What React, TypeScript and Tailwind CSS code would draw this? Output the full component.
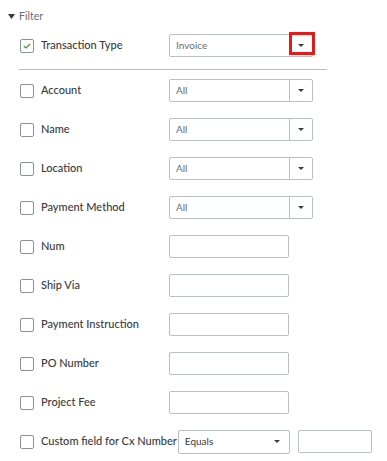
import React from 'react';

type Row = { label: string; kind: 'select' | 'text' | 'custom'; value?: string };

const rows: Row[] = [
  { label: 'Account', kind: 'select', value: 'All' },
  { label: 'Name', kind: 'select', value: 'All' },
  { label: 'Location', kind: 'select', value: 'All' },
  { label: 'Payment Method', kind: 'select', value: 'All' },
  { label: 'Num', kind: 'text' },
  { label: 'Ship Via', kind: 'text' },
  { label: 'Payment Instruction', kind: 'text' },
  { label: 'PO Number', kind: 'text' },
  { label: 'Project Fee', kind: 'text' },
  { label: 'Custom field for Cx Number', kind: 'custom' },
];

const Caret = () => (
  <svg width="6" height="3" viewBox="0 0 6 3" className="block">
    <path d="M0 0 L6 0 L3 3 Z" fill="#393a3d" />
  </svg>
);

const Checkbox = ({ checked }: { checked?: boolean }) => (
  <div className="w-[14px] h-[14px] border border-[#8d9096] rounded-[2px] bg-white flex items-center justify-center shrink-0">
    {checked && (
      <svg width="8" height="6" viewBox="0 0 8 6">
        <path d="M0.8 3 L3 5 L7.2 0.8" fill="none" stroke="#2ca01c" strokeWidth="1.2" />
      </svg>
    )}
  </div>
);

const Select = ({ value, highlight }: { value: string; highlight?: boolean }) => (
  <div className="relative w-[144px] h-[23px] border border-[#babec5] rounded-[2px] flex items-center bg-white">
    <span className="flex-1 pl-[6px] text-[10px] text-[#6b6c72]">{value}</span>
    <div className={`w-[23px] h-full flex items-center justify-center ${highlight ? '' : 'border-l border-[#babec5]'}`}>
      <Caret />
    </div>
    {highlight && (
      <div className="absolute top-[-3px] right-[-3px] w-[26px] h-[23px] border-[3px] border-[#e21b1b]" />
    )}
  </div>
);

const TextBox = ({ w }: { w: string }) => (
  <div className={`${w} h-[23px] border border-[#babec5] rounded-[2px] bg-white`} />
);

export default function App() {
  return (
    <div className="w-[387px] h-[461px] bg-white overflow-hidden text-[#393a3d]" style={{ fontFamily: 'Lato, "Open Sans", sans-serif' }}>
      <div className="h-[26px] pt-[10px] pl-[8px] flex items-start gap-[4px]">
        <svg width="7" height="13" viewBox="0 0 7 13" className="block">
          <path d="M0 4 L7 4 L3.5 9 Z" fill="#393a3d" />
        </svg>
        <span className="text-[10.5px] leading-[13px] text-[#6b6c72]">Filter</span>
      </div>

      <div className="pl-[20px]">
        <div className="h-[39px] flex items-center">
          <Checkbox checked />
          <span className="ml-[7px] w-[128px] text-[11px] font-medium">Transaction Type</span>
          <Select value="Invoice" highlight />
        </div>
        <div className="mt-[4px] w-[308px] h-px bg-[#babec5] -ml-px" />
        <div className="h-px" />
        {rows.map((r) => (
          <div key={r.label} className="h-[39px] flex items-center">
            <Checkbox />
            {r.kind === 'custom' ? (
              <>
                <span className="ml-[7px] text-[11px] font-medium whitespace-nowrap">{r.label}</span>
                <div className="ml-[1px] w-[112px] h-[24px] border border-[#babec5] rounded-[2px] flex items-center bg-white">
                  <span className="flex-1 pl-[6px] text-[10px] text-[#393a3d]">Equals</span>
                  <div className="pr-[9px]"><Caret /></div>
                </div>
                <div className="ml-[8px]"><TextBox w="w-[74px]" /></div>
              </>
            ) : (
              <>
                <span className="ml-[7px] w-[128px] text-[11px] font-medium whitespace-nowrap">{r.label}</span>
                {r.kind === 'select' ? <Select value={r.value || ''} /> : <TextBox w="w-[120px]" />}
              </>
            )}
          </div>
        ))}
      </div>
    </div>
  );
}
